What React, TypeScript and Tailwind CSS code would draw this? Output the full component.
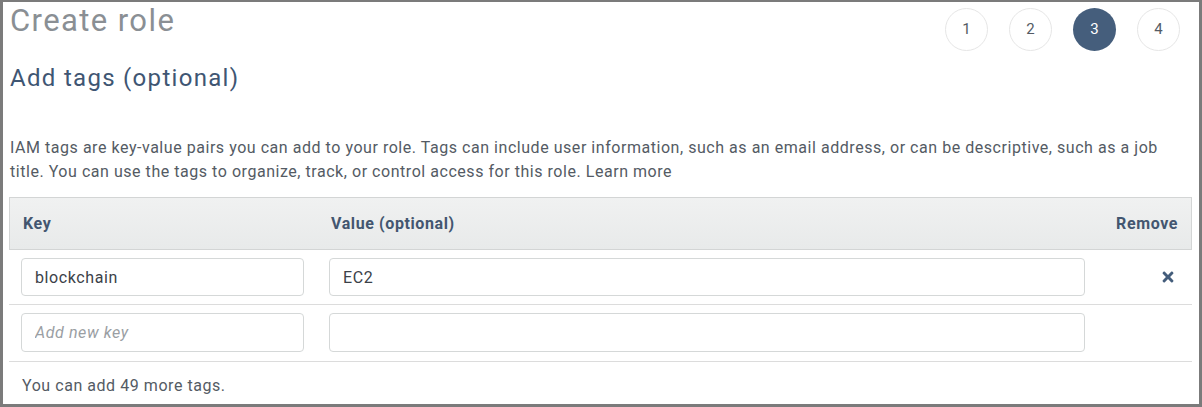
import { FaTimes } from "react-icons/fa"

const steps = [1, 2, 3, 4]
const active = 3

const tags = [{ key: "blockchain", value: "EC2" }]

export default function App() {
  return (
    <div className="w-[1202px] h-[407px] overflow-hidden bg-white border-[3px] border-t-2 border-[#7b7b7b] font-['Roboto',sans-serif] text-[#545b64]">
      <div className="flex items-start justify-between pl-[7px] pr-[19px]">
        <h1 className="mt-[3px] text-[31px] leading-none tracking-[1.4px] text-[#8a8f94]">Create role</h1>
        <div className="mt-[6px] flex gap-[21px]">
          {steps.map((s) => (
            <div
              key={s}
              className={
                s === active
                  ? "flex h-[43px] w-[43px] items-center justify-center rounded-full bg-[#455e7c] text-[15px] text-white"
                  : "flex h-[43px] w-[43px] items-center justify-center rounded-full border border-[#e6e6e6] text-[15px] text-[#545b64]"
              }
            >
              {s}
            </div>
          ))}
        </div>
      </div>

      <h2 className="mt-[15px] pl-[7px] text-[24px] leading-none tracking-[1.3px] text-[#3f5673]">
        Add tags (optional)
      </h2>

      <p className="mt-[46px] pl-[7px] pr-[30px] text-[16px] leading-6 tracking-[0.54px]">
        IAM tags are key-value pairs you can add to your role. Tags can include user information, such as an email
        address, or can be descriptive, such as a job title. You can use the tags to organize, track, or control access
        for this role. Learn more
      </p>

      <div className="ml-[6px] mr-[7px] mt-[13px]">
        <div className="grid h-[53px] grid-cols-[283px_756px_1fr] items-center gap-x-[25px] border border-[#d3d5d5] bg-gradient-to-b from-[#f0f1f1] to-[#e8eaea] pl-3 pr-[13px] text-[16px] font-bold leading-6 tracking-[0.6px] text-[#435670]">
          <div className="pl-px">Key</div>
          <div className="pl-px">Value (optional)</div>
          <div className="text-right">Remove</div>
        </div>

        {tags.map((t) => (
          <div
            key={t.key}
            className="grid grid-cols-[283px_756px_1fr] items-center gap-x-[25px] border-b border-[#dcdcdc] py-2 pl-3 pr-[14px]"
          >
            <input
              readOnly
              value={t.key}
              className="h-[38px] rounded-[4px] border border-[#d5d8d8] px-[13px] text-[16px] tracking-[0.6px] text-[#3b4148] outline-none"
            />
            <input
              readOnly
              value={t.value}
              className="h-[38px] rounded-[4px] border border-[#d5d8d8] px-[13px] text-[16px] tracking-[0.6px] text-[#3b4148] outline-none"
            />
            <div className="flex justify-end pr-[3px]">
              <FaTimes className="h-[16px] w-[14px] text-[#445d7b]" />
            </div>
          </div>
        ))}

        <div className="grid grid-cols-[283px_756px_1fr] items-center gap-x-[25px] border-b border-[#dcdcdc] pb-[9px] pt-2 pl-3 pr-[14px]">
          <input
            readOnly
            placeholder="Add new key"
            className="h-[39px] rounded-[4px] border border-[#d5d8d8] px-[13px] text-[16px] italic tracking-[0.6px] outline-none placeholder:text-[#9a9ea3]"
          />
          <input
            readOnly
            className="h-[39px] rounded-[4px] border border-[#d5d8d8] px-[13px] text-[16px] outline-none"
          />
          <div />
        </div>

        <p className="mt-[12px] pl-[13px] text-[16px] leading-6 tracking-[0.55px]">You can add 49 more tags.</p>
      </div>
    </div>
  )
}
